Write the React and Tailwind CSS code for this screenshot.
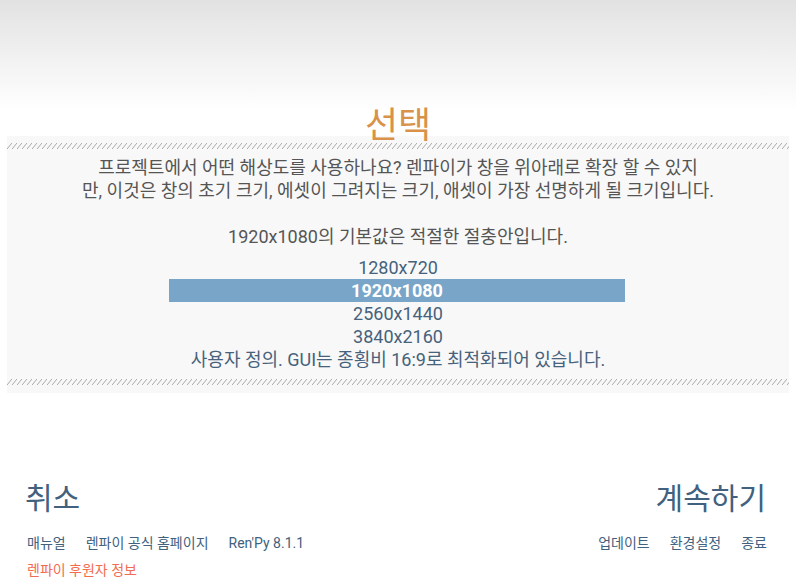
const resolutions = ["1280x720", "1920x1080", "2560x1440", "3840x2160"];

function Hatch() {
  return (
    <svg className="block h-[6px] w-full" aria-hidden="true">
      <defs>
        <pattern id="hatch" width="5" height="6" patternUnits="userSpaceOnUse">
          <line x1="0" y1="6" x2="5" y2="0" stroke="#a9a9a9" strokeWidth="1" />
        </pattern>
      </defs>
      <rect width="100%" height="6" fill="url(#hatch)" />
    </svg>
  );
}

export default function App() {
  return (
    <div className="h-[586px] w-[796px] overflow-hidden bg-[linear-gradient(to_bottom,#e2e2e2,#ffffff_110px)] font-['Roboto','Noto_Sans_CJK_KR',sans-serif]">
      <h1 className="relative z-10 pt-[104px] text-center text-[36px] leading-[44px] text-[#d8924a]">
        선택
      </h1>

      <div className="mx-[7px] -mt-[12px] bg-[#f8f8f8] pt-[7px] pb-[8px]">
        <Hatch />

        <div className="pt-[7px] pb-[8px] text-center text-[18px] leading-[23px]">
          <p className="text-[#555555]">
            프로젝트에서 어떤 해상도를 사용하나요? 렌파이가 창을 위아래로 확장 할 수 있지
            <br />
            만, 이것은 창의 초기 크기, 에셋이 그려지는 크기, 애셋이 가장 선명하게 될 크기입니다.
          </p>
          <p className="mt-[23px] text-[#555555]">
            1920x1080의 기본값은 적절한 절충안입니다.
          </p>

          <div className="mt-[8px] flex flex-col items-center text-[#46627c]">
            {resolutions.map((r) =>
              r === "1920x1080" ? (
                <div
                  key={r}
                  className="w-[456px] -translate-x-[1px] bg-[#78a5c8] font-bold text-white"
                >
                  {r}
                </div>
              ) : (
                <div key={r}>{r}</div>
              )
            )}
            <div>사용자 정의. GUI는 종횡비 16:9로 최적화되어 있습니다.</div>
          </div>
        </div>

        <Hatch />
      </div>

      <div className="mt-[88px] pl-[25px] pr-[30px] text-[#41617e]">
        <div className="flex items-center justify-between text-[30px] leading-[36px]">
          <button>취소</button>
          <button>계속하기</button>
        </div>

        <div className="mt-[16px] flex justify-between pl-[2px] pr-[-1px] text-[14px] leading-[20px]">
          <div className="flex gap-[20px]">
            <span>매뉴얼</span>
            <span>렌파이 공식 홈페이지</span>
            <span>Ren'Py 8.1.1</span>
          </div>
          <div className="-mr-[1px] flex gap-[20px]">
            <span>업데이트</span>
            <span>환경설정</span>
            <span>종료</span>
          </div>
        </div>

        <div className="mt-[7px] pl-[2px] text-[14px] leading-[20px] text-[#f26c50]">
          렌파이 후원자 정보
        </div>
      </div>
    </div>
  );
}
